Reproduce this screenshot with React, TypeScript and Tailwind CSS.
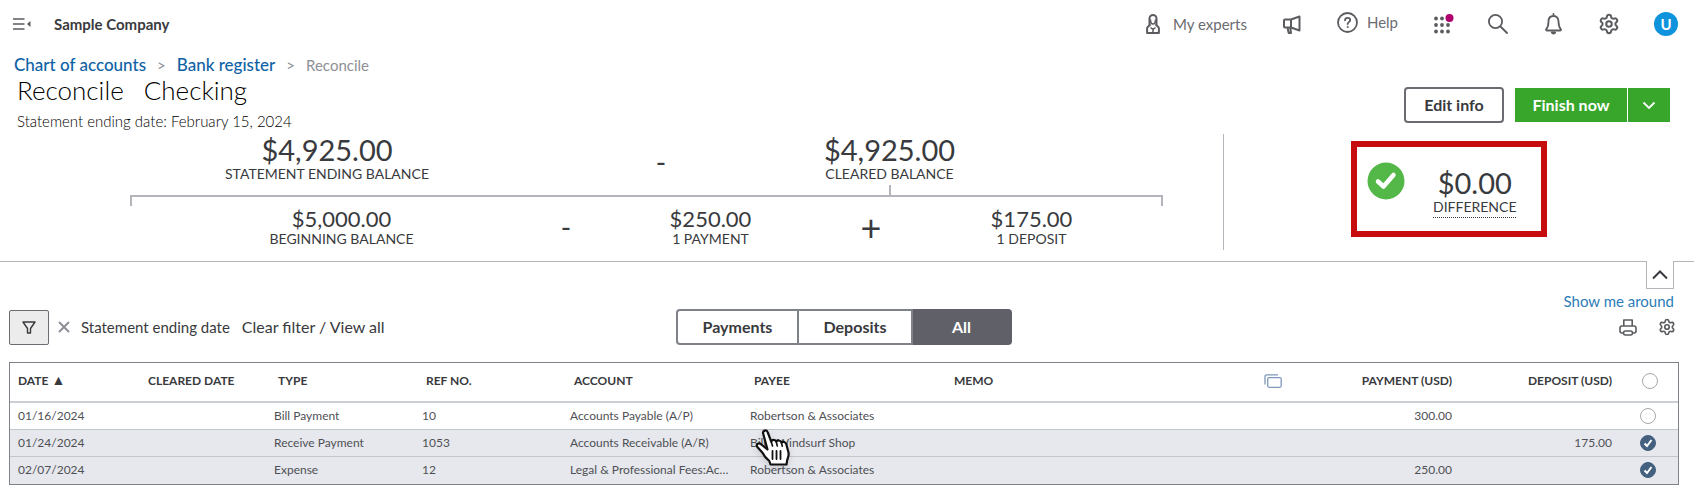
import { useState } from 'react'
import { Settings } from 'lucide-react'

type Row = {
    date: string
    type: string
    ref: string
    account: string
    payee: string
    payment: string
    deposit: string
    cleared: boolean
}

const rows: Row[] = [
    { date: '01/16/2024', type: 'Bill Payment', ref: '10', account: 'Accounts Payable (A/P)', payee: 'Robertson & Associates', payment: '300.00', deposit: '', cleared: false },
    { date: '01/24/2024', type: 'Receive Payment', ref: '1053', account: 'Accounts Receivable (A/R)', payee: "Bill's Windsurf Shop", payment: '', deposit: '175.00', cleared: true },
    { date: '02/07/2024', type: 'Expense', ref: '12', account: 'Legal & Professional Fees:Ac…', payee: 'Robertson & Associates', payment: '250.00', deposit: '', cleared: true },
]

const tabs = [
    { name: 'Payments', width: 'w-[123px]' },
    { name: 'Deposits', width: 'w-[114px]' },
    { name: 'All', width: 'w-[99px]' },
]

function MenuIcon() {
    return (
        <svg width="18" height="12" viewBox="0 0 18 12" fill="none" stroke="#5b5c60" strokeWidth="1.7">
            <path d="M0 1h11.5M0 6h11.5M0 11h11.5" />
            <path d="M17.5 3v6L14 6z" fill="#5b5c60" stroke="none" />
        </svg>
    )
}

function ExpertIcon() {
    return (
        <svg width="14" height="20" viewBox="0 0 14 20" fill="none" stroke="#5b5c60" strokeWidth="2" strokeLinejoin="round">
            <path d="M3.5 11V4.5a3.5 3.5 0 0 1 7 0V11" />
            <path d="M4.5 5.5c0 3 1 4.5 2.5 4.5s2.5-1.5 2.5-4.5" strokeWidth="1.5" />
            <path d="M4.5 10.5 1.7 13a2 2 0 0 0-.6 1.4V19h11.8v-4.6a2 2 0 0 0-.6-1.4L9.5 10.5" />
            <path d="m4.5 13.5 2.5 2 2.5-2M7 14v4" strokeWidth="1.5" />
        </svg>
    )
}

function MegaphoneIcon() {
    return (
        <svg width="18" height="19" viewBox="0 0 18 19" fill="none" stroke="#5b5c60" strokeWidth="2" strokeLinejoin="round" strokeLinecap="round">
            <path d="M8 4.5H2a1 1 0 0 0-1 1v6a1 1 0 0 0 1 1h6M8 4.5v8M8 4.5l8.5-3v14l-8.5-3M4.5 12.5l1.2 5.5H8l-.8-5.5" />
        </svg>
    )
}

function HelpIcon() {
    return (
        <svg width="21" height="21" viewBox="0 0 21 21" fill="none" stroke="#5b5c60" strokeWidth="1.8" strokeLinecap="round">
            <circle cx="10.5" cy="10.5" r="9.5" />
            <path d="M8 8.3c0-1.5 1.1-2.5 2.6-2.5s2.6 1 2.6 2.3c0 2-2.6 2-2.6 4" />
            <circle cx="10.6" cy="15" r=".6" fill="#5b5c60" strokeWidth=".8" />
        </svg>
    )
}

function AppsIcon() {
    return (
        <svg width="20" height="20" viewBox="0 0 20 20" fill="#5b5c60">
            {[4.5, 11, 17.5].map((y) => [2, 8, 14].map((x) => <circle key={`${x}-${y}`} cx={x} cy={y} r="1.9" />))}
            <circle cx="15.5" cy="4" r="4" fill="#b0006d" />
        </svg>
    )
}

function SearchIcon() {
    return (
        <svg width="20" height="20" viewBox="0 0 20 20" fill="none" stroke="#5b5c60" strokeWidth="1.8" strokeLinecap="round">
            <circle cx="7.5" cy="7.5" r="6.6" />
            <path d="m12.5 12.5 6.5 6.5" />
        </svg>
    )
}

function BellIcon() {
    return (
        <svg width="17" height="22" viewBox="0 0 17 22" fill="none" stroke="#5b5c60" strokeWidth="1.8" strokeLinecap="round" strokeLinejoin="round">
            <path d="M8.5 1v2M8.5 3C5.2 3 3.5 5.4 3.5 8.5c0 4.5-.8 6-2.3 7.7-.4.5-.2 1.3.6 1.3h13.4c.8 0 1-.8.6-1.3-1.5-1.7-2.3-3.2-2.3-7.7C13.5 5.4 11.8 3 8.5 3z" />
            <path d="M6.8 19.5a1.8 1.8 0 0 0 3.4 0z" fill="#5b5c60" />
        </svg>
    )
}

function PrinterIcon() {
    return (
        <svg width="18" height="17" viewBox="0 0 18 17" fill="none" stroke="#5b5c60" strokeWidth="1.6" strokeLinejoin="round">
            <path d="M4.8 7V1h8.4v6" />
            <path d="M4.5 14H3a2 2 0 0 1-2-2V9a2 2 0 0 1 2-2h12a2 2 0 0 1 2 2v3a2 2 0 0 1-2 2h-1.5" />
            <path d="M6.5 12h5c1 0 2 1 2 2s-1 2-2 2h-5c-1 0-2-1-2-2s1-2 2-2z" />
        </svg>
    )
}

function CopyIcon() {
    return (
        <svg width="18" height="14" viewBox="0 0 18 14" fill="none" stroke="#7f98bb" strokeWidth="1.3">
            <rect x="3.7" y="3.7" width="13.5" height="9.6" rx="1.5" />
            <path d="M1 10.5V2.5A1.7 1.7 0 0 1 2.7.8H14" />
        </svg>
    )
}

function HandCursor() {
    return (
        <svg width="37" height="38" viewBox="0 0 37 38" className="drop-shadow-md" stroke="#111" strokeLinecap="round" strokeLinejoin="round">
            <path
                d="M12.5 20.5 8.2 4.8C7.3 1.3 11.7.2 12.8 3.5l3.5 9.3c.3-2.5 4.2-2.6 5 0 .8-2 4.5-1.8 5.2.8 1.4-1.5 4.2-.7 4.8 1.7l2.2 8.2c.6 3-.5 4.8-1.3 7.5l-.7 4.5H15.5l-1.2-3.5c-3-2.5-5.3-5-7-8.5L2.3 18c-1.8-3 1.7-4.7 4-2.5z"
                fill="#fff"
                strokeWidth="2.2"
            />
            <path d="M17.5 22v8M21.5 22v8M25.5 22v8" fill="none" strokeWidth="1.8" />
            <path d="m16.3 13 1.2 4M21.3 13l1 4M26.5 13.8l.8 3.4" fill="none" strokeWidth="1.6" />
        </svg>
    )
}

type AmountProps = { value: string; label: string; large?: boolean; dotted?: boolean }

function Amount({ value, label, large = false, dotted = false }: AmountProps) {
    return (
        <div className="flex flex-col items-center whitespace-nowrap text-[#393a3d]">
            <span className={large ? 'text-[29px] leading-8' : 'text-[22px] leading-6'}>{value}</span>
            <span className={dotted ? 'border-b border-dotted border-[#393a3d] pb-0.5 text-sm leading-4' : 'text-sm leading-4'}>{label}</span>
        </div>
    )
}

function ClearedBox({ label, checked, onChange }: { label: string; checked: boolean; onChange: () => void }) {
    return (
        <label className="relative block size-4">
            <input
                type="checkbox"
                aria-label={label}
                checked={checked}
                onChange={onChange}
                className="peer block size-4 appearance-none rounded-full border border-[#a5a7ac] bg-white checked:border-[#44607f] checked:bg-[#44607f]"
            />
            <svg viewBox="0 0 16 16" className="pointer-events-none absolute inset-0 hidden size-4 peer-checked:block" fill="none" stroke="#fff" strokeWidth="2">
                <path d="m4.5 8.5 2.5 2.5 4.5-6" />
            </svg>
        </label>
    )
}

export default function App() {
    const [tab, setTab] = useState('All')
    const [cleared, setCleared] = useState(rows.map((row) => row.cleared))
    const allCleared = cleared.every(Boolean)

    const toggle = (index: number) => setCleared((prev) => prev.map((value, i) => (i === index ? !value : value)))

    return (
        <div className="bg-white font-['Lato',sans-serif] text-[#393a3d]">
            <header className="flex h-12 items-center justify-between pr-4 pl-[13px]">
                <div className="flex items-center gap-[23px]">
                    <button aria-label="Collapse menu">
                        <MenuIcon />
                    </button>
                    <span className="text-[15px] font-bold">Sample Company</span>
                </div>
                <div className="flex items-center text-[15px] text-[#6b6c72]">
                    <button className="mr-9 flex items-center gap-[13px]">
                        <ExpertIcon />
                        My experts
                    </button>
                    <button className="mr-9" aria-label="Announcements">
                        <MegaphoneIcon />
                    </button>
                    <button className="mr-9 flex items-center gap-[9px] pb-[3px]">
                        <HelpIcon />
                        Help
                    </button>
                    <button className="mr-[34px]" aria-label="Apps">
                        <AppsIcon />
                    </button>
                    <button className="mr-[37px]" aria-label="Search">
                        <SearchIcon />
                    </button>
                    <button className="mr-9" aria-label="Notifications">
                        <BellIcon />
                    </button>
                    <button className="mr-[34px]" aria-label="Settings">
                        <Settings size={22} strokeWidth={2.2} color="#5b5c60" />
                    </button>
                    <button className="size-6 rounded-full bg-[#0f93dc] text-[15px] font-bold text-white">U</button>
                </div>
            </header>

            <nav aria-label="Breadcrumb" className="flex h-8 items-center pt-0.5 pl-[14px] text-[17px]">
                <a href="#accounts" className="font-medium text-[#0f62a5]">
                    Chart of accounts
                </a>
                <span className="mx-[11px] text-[15px] text-[#8d9096]">&gt;</span>
                <a href="#register" className="font-medium text-[#0f62a5]">
                    Bank register
                </a>
                <span className="mx-[11px] text-[15px] text-[#8d9096]">&gt;</span>
                <span className="text-[15px] text-[#8d9096]">Reconcile</span>
            </nav>

            <div className="flex items-start justify-between pr-6 pb-1 pl-[17px]">
                <div>
                    <h1 className="flex gap-5 text-[26px] leading-5 font-light text-black">
                        <span>Reconcile</span>
                        <span>Checking</span>
                    </h1>
                    <p className="mt-3 text-[15px] leading-[18px] font-light text-black">Statement ending date: February 15, 2024</p>
                </div>
                <div className="mt-[7px] flex items-center">
                    <button className="mr-[11px] h-9 w-[100px] rounded border-2 border-[#6b6c72] text-base font-bold">Edit info</button>
                    <button className="h-[34px] w-28 bg-[#37a62a] text-base font-bold text-white">Finish now</button>
                    <button className="ml-px flex h-[34px] w-[42px] items-center justify-center bg-[#37a62a]" aria-label="More finish options">
                        <svg width="14" height="9" viewBox="0 0 14 9" fill="none" stroke="#fff" strokeWidth="1.8">
                            <path d="m1.5 1.5 5.5 5.5 5.5-5.5" />
                        </svg>
                    </button>
                </div>
            </div>

            <section className="grid grid-cols-[1224fr_470fr] border-b border-[#b4b5ba] pb-[11px]">
                <div className="border-r border-[#b4b5ba] pr-[60px] pl-[130px]">
                    <div className="grid h-[51px] grid-cols-[394fr_274fr_183fr_182fr] items-start">
                        <Amount large value="$4,925.00" label="STATEMENT ENDING BALANCE" />
                        <span className="self-center pt-1 text-center text-[28px]">-</span>
                        <Amount large value="$4,925.00" label="CLEARED BALANCE" />
                    </div>
                    <div className="grid grid-cols-[394fr_274fr_183fr_182fr]">
                        <div className="col-start-3 h-[10px] w-[2px] justify-self-center bg-[#b4b5ba]" />
                    </div>
                    <div className="h-[11px] border-2 border-b-0 border-[#b4b5ba]" />
                    <div className="grid h-11 grid-cols-[423fr_26fr_263fr_58fr_263fr] items-center pb-0.5">
                        <Amount value="$5,000.00" label="BEGINNING BALANCE" />
                        <span className="text-center text-[28px] leading-10">-</span>
                        <Amount value="$250.00" label="1 PAYMENT" />
                        <span className="text-center text-4xl leading-10">+</span>
                        <Amount value="$175.00" label="1 DEPOSIT" />
                    </div>
                </div>
                <div className="flex justify-center pr-5">
                    <div className="mt-[7px] flex h-24 w-[196px] border-6 border-[#c50d10]">
                        <svg width="38" height="38" viewBox="0 0 38 38" className="mt-[15px] ml-[10px]" fill="none">
                            <circle cx="19" cy="19" r="18.5" fill="#53b848" />
                            <path d="m11 19.5 5.5 5L26.5 13" stroke="#fff" strokeWidth="4.5" strokeLinecap="round" strokeLinejoin="round" />
                        </svg>
                        <div className="mt-5 ml-7">
                            <Amount large dotted value="$0.00" label="DIFFERENCE" />
                        </div>
                    </div>
                </div>
            </section>

            <div className="flex flex-col items-end pr-5">
                <button className="-mt-px flex h-7 w-7 items-center justify-center border border-t-0 border-[#b4b5ba] bg-white" aria-label="Collapse summary">
                    <svg width="16" height="10" viewBox="0 0 16 10" fill="none" stroke="#393a3d" strokeWidth="2">
                        <path d="m1 8.5 7-7 7 7" />
                    </svg>
                </button>
                <a href="#tour" className="-mb-1 text-[15px] leading-6 text-[#2c7cb8]">
                    Show me around
                </a>
            </div>

            <div className="grid h-9 grid-cols-[1fr_auto_1fr] items-center pr-[15px] pl-[9px]">
                <div className="flex items-center">
                    <button className="flex h-[35px] w-10 items-center justify-center rounded-xs border border-[#6b6c72] bg-[#ececec]" aria-label="Filter">
                        <svg width="14" height="13" viewBox="0 0 14 13" fill="none" stroke="#393a3d" strokeWidth="1.4" strokeLinejoin="round">
                            <path d="M1 1h12L8.5 7.5V12h-3V7.5z" />
                        </svg>
                    </button>
                    <button className="ml-[9px]" aria-label="Remove filter">
                        <svg width="12" height="12" viewBox="0 0 12 12" stroke="#8d9096" strokeWidth="2">
                            <path d="m1 1 10 10M11 1 1 11" />
                        </svg>
                    </button>
                    <span className="ml-[11px] text-[15px]">Statement ending date</span>
                    <button className="ml-3 text-base">Clear filter / View all</button>
                </div>
                <div className="flex h-9">
                    {tabs.map(({ name, width }) => (
                        <button
                            key={name}
                            onClick={() => setTab(name)}
                            className={`${width} border-2 border-l-0 text-base font-bold first:rounded-l first:border-l-2 last:rounded-r ${tab === name ? 'border-[#5f6068] bg-[#5f6068] text-white' : 'border-[#80828a]'}`}
                        >
                            {name}
                        </button>
                    ))}
                </div>
                <div className="flex items-center justify-end gap-[21px] pr-[3px]">
                    <button aria-label="Print">
                        <PrinterIcon />
                    </button>
                    <button aria-label="Table settings">
                        <Settings size={18} strokeWidth={2.2} color="#5b5c60" />
                    </button>
                </div>
            </div>

            <div className="relative mt-[17px] mr-[15px] ml-[9px] border border-[#80828a]">
                <table className="w-full table-fixed border-collapse text-left text-xs whitespace-nowrap text-[#4f5055]">
                    <thead>
                        <tr className="h-[39px] border-b-2 border-[#cbced6] text-[#393a3d] [&>th]:pb-0.5">
                            <th className="w-[130px] pl-2">
                                DATE <span className="text-sm leading-3">▲</span>
                            </th>
                            <th className="w-[126px] pl-2">CLEARED DATE</th>
                            <th className="w-[148px] pl-3">TYPE</th>
                            <th className="w-[148px] pl-3">REF NO.</th>
                            <th className="w-[180px] pl-3">ACCOUNT</th>
                            <th className="w-[200px] pl-3">PAYEE</th>
                            <th className="pl-3">MEMO</th>
                            <th className="w-[60px]">
                                <CopyIcon />
                            </th>
                            <th className="w-[128px] text-right">PAYMENT (USD)</th>
                            <th className="w-[160px] text-right">DEPOSIT (USD)</th>
                            <th className="w-[66px] pl-[30px]">
                                <ClearedBox label="Select all" checked={allCleared} onChange={() => setCleared(rows.map(() => !allCleared))} />
                            </th>
                        </tr>
                    </thead>
                    <tbody>
                        {rows.map((row, index) => (
                            <tr key={row.date} className={`h-[27px] border-b border-[#c3c6cc] last:h-7 last:border-b-0 ${cleared[index] ? 'bg-[#e6e8ed]' : 'bg-white'}`}>
                                <td className="pl-2">{row.date}</td>
                                <td />
                                <td className="pl-2">{row.type}</td>
                                <td className="pl-2">{row.ref}</td>
                                <td className="pl-2">{row.account}</td>
                                <td className="pl-2">{row.payee}</td>
                                <td />
                                <td />
                                <td className="text-right">{row.payment}</td>
                                <td className="text-right">{row.deposit}</td>
                                <td className="pl-7">
                                    <ClearedBox label={`Clear ${row.type} ${row.date}`} checked={cleared[index]} onChange={() => toggle(index)} />
                                </td>
                            </tr>
                        ))}
                    </tbody>
                </table>
                <div className="pointer-events-none absolute top-[66px] left-[745px]">
                    <HandCursor />
                </div>
            </div>
        </div>
    )
}
